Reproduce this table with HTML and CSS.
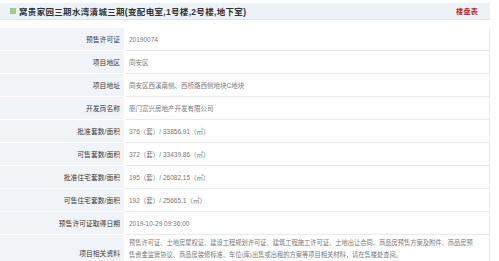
FILE: index.html
```html
<!DOCTYPE html>
<html lang="zh-CN">
<head>
<meta charset="utf-8">
<title>预售许可</title>
<link rel="stylesheet" href="styles.css">
</head>
<body>
<div class="page">
  <div class="header">
    <div class="title"><span class="icon"></span>窝贵家园三期水湾清城三期(变配电室,1号楼,2号楼,地下室)</div>
    <a class="link">楼盘表</a>
  </div>
  <table class="info">
    <tr><th>预售许可证</th><td>20190074</td></tr>
    <tr><th>项目地区</th><td>同安区</td></tr>
    <tr><th>项目地址</th><td>同安区西溪南侧、西桥路西侧地块C地块</td></tr>
    <tr><th>开发商名称</th><td>厦门富兴房地产开发有限公司</td></tr>
    <tr><th>批准套数/面积</th><td>376（套）/ 33856.91（㎡）</td></tr>
    <tr><th>可售套数/面积</th><td>372（套）/ 33439.86（㎡）</td></tr>
    <tr><th>批准住宅套数/面积</th><td>195（套）/ 26082.15（㎡）</td></tr>
    <tr><th>可售住宅套数/面积</th><td>192（套）/ 25665.1（㎡）</td></tr>
    <tr><th>预售许可证取得日期</th><td>2019-10-29 09:36:00</td></tr>
    <tr class="tall"><th>项目相关资料</th><td class="multi">预售许可证、土地房屋权证、建设工程规划许可证、建筑工程施工许可证、土地出让合同、商品房预售方案及附件、商品房预<br>售资金监管协议、商品房装修标准、车位(库)出售或出租的方案等项目相关材料，请在售楼处查阅。</td></tr>
  </table>
</div>
</body>
</html>
```
FILE: styles.css
```css
html, body {
  margin: 0;
  padding: 0;
  background: #ffffff;
}
body {
  font-family: "Liberation Sans", "Noto Sans CJK SC", sans-serif;
}
.page {
  width: 490px;
  padding-top: 3px;
}
.header {
  height: 16px;
  background: #edf2f7;
  border-bottom: 1px solid #dde5ee;
  display: flex;
  align-items: center;
  justify-content: space-between;
  padding: 0 12px 0 10px;
}
.title {
  display: flex;
  align-items: center;
  font-size: 8.5px;
  font-weight: bold;
  color: #333;
  letter-spacing: 0.32px;
}
.icon {
  width: 6px;
  height: 6px;
  background: #9ccd85;
  margin-right: 3px;
}
.link {
  font-size: 7px;
  color: #c0262c;
  font-weight: bold;
  letter-spacing: 0.3px;
}
.info {
  margin-top: 8px;
  width: 490px;
  border-collapse: separate;
  border-spacing: 0;
  table-layout: fixed;
}
.info th {
  width: 120px;
  height: 22px;
  padding: 0 4px 0 0;
  background: #f0f4f9;
  border-bottom: 1px solid #ffffff;
  text-align: right;
  font-weight: normal;
  font-size: 6.8px;
  color: #3a3a3a;
}
.info td {
  height: 22px;
  padding: 0 0 0 3px;
  border-left: 2px solid #ffffff;
  border-bottom: 1px solid #e9e9e9;
  border-right: 1px solid #ececec;
  font-size: 6.5px;
  color: #777;
  white-space: nowrap;
}
.info .tall th,
.info .tall td {
  height: 34px;
}
.info td.multi {
  vertical-align: top;
  font-size: 6.25px;
  line-height: 12px;
  padding-top: 2px;
}
```
